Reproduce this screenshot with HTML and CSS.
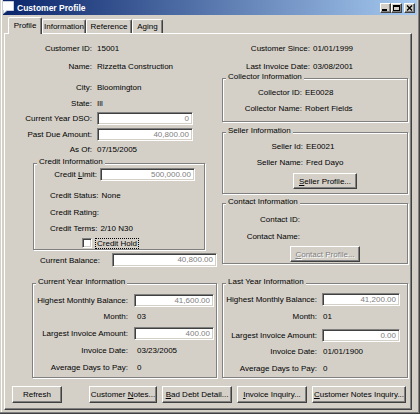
FILE: index.html
```html
<!DOCTYPE html>
<html>
<head>
<meta charset="utf-8">
<title>Customer Profile</title>
<link rel="stylesheet" href="styles.css">
</head>
<body>
<div class="win">
  <div class="titlebar">
    <svg class="appicon" width="12" height="13" viewBox="0 0 12 13">
      <path d="M0.5 0.5H11.5V9.5H5L1.5 12.5V9.5H0.5Z" fill="#fff" stroke="#c8d0e0" stroke-width="1"/>
    </svg>
    <span class="title">Customer Profile</span>
    <div class="capbtns">
      <span class="capbtn"><svg width="9" height="8" viewBox="0 0 9 8"><rect x="1" y="5" width="5" height="2" fill="#000"/></svg></span>
      <span class="capbtn"><svg width="9" height="8" viewBox="0 0 9 8"><rect x="1.5" y="1.5" width="6" height="5" fill="none" stroke="#000"/><rect x="1" y="1" width="7" height="2" fill="#000"/></svg></span>
      <span class="capbtn close"><svg width="9" height="8" viewBox="0 0 9 8"><path d="M2 1.5L7 6.5M7 1.5L2 6.5" stroke="#000" stroke-width="1.4"/></svg></span>
    </div>
  </div>

  <div class="tabs">
    <div class="tab sel t-profile">Profile</div>
    <div class="tab t-info">Information</div>
    <div class="tab t-ref">Reference</div>
    <div class="tab t-aging">Aging</div>
  </div>

  <div class="panel">
    <div class="top">
      <div class="lcol">
        <div class="row"><span class="lbl">Customer ID:</span><span class="val">15001</span></div>
        <div class="row mt4"><span class="lbl">Name:</span><span class="val">Rizzetta Construction</span></div>
        <div class="row mt7"><span class="lbl">City:</span><span class="val">Bloomington</span></div>
        <div class="row mt2"><span class="lbl">State:</span><span class="val">Ill</span></div>
        <div class="row mt1"><span class="lbl">Current Year DSO:</span><span class="field">0</span></div>
        <div class="row mt2"><span class="lbl">Past Due Amount:</span><span class="field">40,800.00</span></div>
        <div class="row mt1"><span class="lbl">As Of:</span><span class="val">07/15/2005</span></div>

        <div class="group credit mt7">
          <span class="legend">Credit Information</span>
          <div class="row"><span class="lbl">Credit <u>L</u>imit:</span><span class="field">500,000.00</span></div>
          <div class="row plain mt7"><span>Credit Status:</span><span class="pv">None</span></div>
          <div class="row plain mt3"><span>Credit Rating:</span></div>
          <div class="row plain mt2"><span>Credit Terms:</span><span class="pv">2/10 N30</span></div>
          <div class="row chkrow mt2"><span class="chk"></span><span class="focus">Credit Hold</span></div>
        </div>

        <div class="row balrow mt3"><span class="lbl">Current Balance:</span><span class="field">40,800.00</span></div>
      </div>

      <div class="rcol">
        <div class="row"><span class="lbl">Customer Since:</span><span class="val">01/01/1999</span></div>
        <div class="row mt4"><span class="lbl">Last Invoice Date:</span><span class="val">03/08/2001</span></div>

        <div class="group collector mt5">
          <span class="legend">Collector Information</span>
          <div class="row mt3"><span class="lbl">Collector ID:</span><span class="val">EE0028</span></div>
          <div class="row mt2"><span class="lbl">Collector Name:</span><span class="val">Robert Fields</span></div>
        </div>

        <div class="group seller mt10">
          <span class="legend">Seller Information</span>
          <div class="row mt3"><span class="lbl">Seller Id:</span><span class="val">EE0021</span></div>
          <div class="row mt2"><span class="lbl">Seller Name:</span><span class="val">Fred Dayo</span></div>
          <button class="btn mt4"><span><u>S</u>eller Profile...</span></button>
        </div>

        <div class="group contact mt9">
          <span class="legend">Contact Information</span>
          <div class="row mt5"><span class="lbl">Contact ID:</span></div>
          <div class="row mt3"><span class="lbl">Contact Name:</span></div>
          <button class="btn disabled mt3"><span><u>C</u>ontact Profile...</span></button>
        </div>
      </div>
    </div>

    <div class="bottom">
      <div class="group cy">
        <span class="legend">Current Year Information</span>
        <div class="row mt6"><span class="lbl">Highest Monthly Balance:</span><span class="field">41,600.00</span></div>
        <div class="row mt2"><span class="lbl">Month:</span><span class="val">03</span></div>
        <div class="row mt3"><span class="lbl">Largest Invoice Amount:</span><span class="field">400.00</span></div>
        <div class="row mt3"><span class="lbl">Invoice Date:</span><span class="val">03/23/2005</span></div>
        <div class="row mt3"><span class="lbl">Average Days to Pay:</span><span class="val">0</span></div>
      </div>
      <div class="group ly">
        <span class="legend">Last Year Information</span>
        <div class="row mt5"><span class="lbl">Highest Monthly Balance:</span><span class="field">41,200.00</span></div>
        <div class="row mt3"><span class="lbl">Month:</span><span class="val">01</span></div>
        <div class="row mt5"><span class="lbl">Largest Invoice Amount:</span><span class="field">0.00</span></div>
        <div class="row mt2"><span class="lbl">Invoice Date:</span><span class="val">01/01/1900</span></div>
        <div class="row mt3"><span class="lbl">Average Days to Pay:</span><span class="val">0</span></div>
      </div>
    </div>

    <div class="btnrow">
      <button class="btn b-refresh">Refresh</button>
      <button class="btn b-notes"><span>Customer <u>N</u>otes...</span></button>
      <button class="btn b-debt"><span><u>B</u>ad Debt Detail...</span></button>
      <button class="btn b-inv"><span><u>I</u>nvoice Inquiry...</span></button>
      <button class="btn b-cni"><span><u>C</u>ustomer Notes Inquiry...</span></button>
    </div>
  </div>
</div>
</body>
</html>
```

FILE: styles.css
```css
* { box-sizing: border-box; }
html, body { margin: 0; padding: 0; }
body {
  background: #d4d0c8;
  font-family: "Liberation Sans", Arial, sans-serif;
  font-size: 8px;
  color: #000;
}
u { text-decoration-thickness: 1px; text-underline-offset: 1px; }

.win {
  width: 420px;
  height: 414px;
  padding: 0 3px;
  background: #d4d0c8;
  overflow: hidden;
  box-shadow: inset -1px -1px #404040, inset -2px -2px #808080, inset 1px 0 #d4d0c8, inset 2px 0 #fff;
}

/* title bar */
.titlebar {
  height: 15px;
  display: flex;
  align-items: center;
  background: linear-gradient(to right, #0a246a, #a6caf0);
}
.appicon { flex: none; margin-left: -1px; }
.title {
  color: #fff;
  font-weight: bold;
  font-size: 8.5px;
  margin-left: 3px;
  white-space: nowrap;
}
.capbtns { margin-left: auto; margin-right: 2px; display: flex; }
.capbtn {
  width: 11px;
  height: 10px;
  background: #d4d0c8;
  border: 1px solid;
  border-color: #fff #404040 #404040 #fff;
  box-shadow: inset -1px -1px #808080;
  display: flex;
  align-items: center;
  justify-content: center;
}
.capbtn svg { display: block; }
.capbtn.close { margin-left: 2px; }

/* tabs */
.tabs {
  display: flex;
  align-items: flex-end;
  height: 18px;
  padding-left: 5px;
}
.tab {
  height: 14px;
  border: 1px solid;
  border-color: #fff #404040 transparent #fff;
  border-bottom: none;
  border-radius: 2px 2px 0 0;
  box-shadow: inset -1px 0 #808080;
  display: flex;
  align-items: center;
  justify-content: center;
  white-space: nowrap;
}
.tab.sel {
  height: 17px;
  margin-bottom: -1px;
  padding-bottom: 2px;
  position: relative;
  z-index: 1;
  background: #d4d0c8;
}
.t-profile { width: 34px; }
.t-info { width: 44px; }
.t-ref { width: 46px; }
.t-aging { width: 31px; }

/* tab page */
.panel {
  margin-left: 1px;
  width: 408px;
  height: 377px;
  border: 1px solid;
  border-color: #fff #404040 #404040 #fff;
  box-shadow: inset -1px -1px #808080;
  padding-top: 7px;
}

.top { display: flex; align-items: flex-start; }
.lcol { width: 214px; flex: none; }
.rcol { flex: 1; padding-left: 3px; }

.row {
  display: flex;
  align-items: center;
  height: 14px;
  white-space: nowrap;
}
.lbl { flex: none; text-align: right; }

.field {
  flex: none;
  height: 13px;
  background: #fff;
  border: 1px solid;
  border-color: #808080 #fff #fff #808080;
  box-shadow: inset 1px 1px #404040, inset -1px -1px #d4d0c8;
  color: #808080;
  text-align: right;
  padding-right: 3px;
  line-height: 11px;
}

/* group boxes */
.group {
  border: 1px solid #808080;
  box-shadow: inset 1px 1px #fff, 1px 1px #fff;
}
.legend {
  display: block;
  width: max-content;
  height: 10px;
  line-height: 10px;
  margin: -7px 0 0 3px;
  padding: 0 2px;
  background: #d4d0c8;
  white-space: nowrap;
}

/* left column */
.lcol > .row .lbl { width: 87px; }
.lcol > .row .val,
.lcol > .row .field { margin-left: 5px; }
.lcol > .row .field { width: 96px; }

.credit { width: 172px; margin-left: 28px; }
.credit .lbl { width: 63px; }
.credit .field { margin-left: 3px; width: 95px; }
.credit .plain { padding-left: 16px; }
.credit .pv { margin-left: 3px; }
.chkrow { height: 12px; padding-left: 48px; }
.chk {
  width: 10px;
  height: 10px;
  background: #fff;
  border: 1px solid;
  border-color: #808080 #fff #fff #808080;
  box-shadow: inset 1px 1px #404040, inset -1px -1px #d4d0c8;
}
.focus {
  margin-left: 3px;
  padding: 0 1px;
  height: 11px;
  line-height: 9px;
  border: 1px dotted #000;
}

.lcol > .balrow { padding-left: 35px; }
.lcol > .balrow .lbl { width: 72px; text-align: left; }
.lcol > .balrow .field { margin-left: 0; width: 105px; height: 14px; line-height: 12px; }

/* right column */
.rcol > .row .lbl { width: 88px; }
.rcol > .row .val { margin-left: 3px; }
.rcol .group { width: 186px; }
.rcol .group .val { margin-left: 3px; }
.collector { padding-bottom: 6px; }
.collector .lbl { width: 79px; }
.seller { padding-bottom: 4px; }
.seller .lbl { width: 80px; }
.seller .btn { margin-left: 70px; width: 64px; height: 16px; }
.contact { padding-bottom: 1px; }
.contact .lbl { width: 77px; }
.contact .btn { margin-left: 67px; width: 70px; height: 16px; }

/* bottom groups */
.bottom {
  display: flex;
  padding-left: 27px;
  margin-top: 16px;
}
.cy { width: 185px; padding-bottom: 3px; }
.ly { width: 186px; margin-left: 5px; padding-bottom: 2px; }
.cy .lbl { width: 95px; }
.cy .field { margin-left: 6px; width: 80px; }
.cy .val { margin-left: 9px; }
.ly .lbl { width: 94px; }
.ly .field { margin-left: 5px; width: 78px; }
.ly .val { margin-left: 6px; }

/* buttons */
.btn {
  appearance: none;
  display: flex;
  align-items: center;
  justify-content: center;
  margin: 0;
  padding: 0;
  font: inherit;
  color: #000;
  background: #d4d0c8;
  border: 1px solid;
  border-color: #fff #404040 #404040 #fff;
  box-shadow: inset -1px -1px #808080;
  white-space: nowrap;
}
.btn.disabled { color: #808080; text-shadow: 1px 1px #fff; }

.btnrow {
  display: flex;
  margin-top: 8px;
  padding-left: 7px;
}
.btnrow .btn { height: 17px; margin-right: 5px; }
.b-refresh { width: 50px; margin-right: 27px !important; }
.b-notes { width: 68px; }
.b-debt { width: 70px; }
.b-inv { width: 70px; }
.b-cni { width: 94px; }

/* spacing */
.mt1 { margin-top: 1px; }
.mt2 { margin-top: 2px; }
.mt3 { margin-top: 3px; }
.mt4 { margin-top: 4px; }
.mt5 { margin-top: 5px; }
.mt6 { margin-top: 6px; }
.mt7 { margin-top: 7px; }
.mt9 { margin-top: 9px; }
.mt10 { margin-top: 10px; }
```
